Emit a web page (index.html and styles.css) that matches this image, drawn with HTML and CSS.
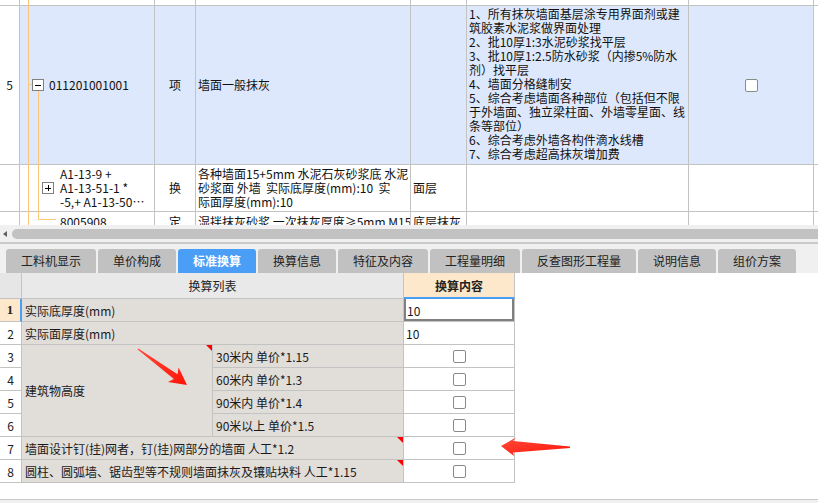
FILE: index.html
```html
<!DOCTYPE html>
<html lang="zh">
<head>
<meta charset="utf-8">
<title>标准换算</title>
<link rel="stylesheet" href="styles.css">
</head>
<body>
<div class="top">
  <div class="tgrid">
    <div class="c"></div><div class="c"></div><div class="c"></div><div class="c"></div><div class="c"></div><div class="c"></div><div class="c"></div><div class="c last"></div>

    <div class="c num mid">5</div>
    <div class="c sel mid code l1"><svg class="box" width="12" height="12" viewBox="0 0 12 12"><rect x="0.5" y="0.5" width="11" height="11" fill="#fff" stroke="#808080"/><path d="M3 6.5h6" stroke="#000"/></svg><span>011201001001</span></div>
    <div class="c sel mid center">项</div>
    <div class="c sel mid txt">墙面一般抹灰</div>
    <div class="c sel"></div>
    <div class="c sel txt feat">1、所有抹灰墙面基层涂专用界面剂或建<br>筑胶素水泥浆做界面处理<br>2、批10厚1:3水泥砂浆找平层<br>3、批10厚1:2.5防水砂浆（内掺5%防水<br>剂）找平层<br>4、墙面分格缝制安<br>5、综合考虑墙面各种部位（包括但不限<br>于外墙面、独立梁柱面、外墙零星面、线<br>条等部位）<br>6、综合考虑外墙各构件滴水线槽<br>7、综合考虑超高抹灰增加费</div>
    <div class="c sel mid center"><span class="cb"></span></div>
    <div class="c last"></div>

    <div class="c num"></div>
    <div class="c mid code l2"><svg class="box" width="12" height="12" viewBox="0 0 12 12"><rect x="0.5" y="0.5" width="11" height="11" fill="#fff" stroke="#808080"/><path d="M3 6.5h6M6.5 3v6" stroke="#000"/></svg><span class="lines">A1-13-9 +<br>A1-13-51-1 *<br>-5,+ A1-13-50…</span></div>
    <div class="c mid center">换</div>
    <div class="c txt pt2">各种墙面15+5mm 水泥石灰砂浆底 水泥<br>砂浆面 外墙&nbsp; 实际底厚度(mm):10&nbsp; 实<br>际面厚度(mm):10</div>
    <div class="c mid txt">面层</div>
    <div class="c"></div>
    <div class="c"></div>
    <div class="c last"></div>

    <div class="c num"></div>
    <div class="c code l3 pt3">8005908</div>
    <div class="c center pt3">定</div>
    <div class="c txt pt3">湿拌抹灰砂浆 一次抹灰厚度≥5mm M15</div>
    <div class="c txt pt3">底层抹灰</div>
    <div class="c"></div>
    <div class="c"></div>
    <div class="c last"></div>
  </div>
  <svg class="tree" width="818" height="225" viewBox="0 0 818 225">
    <g stroke="#fcc67a" stroke-width="1" fill="none">
      <path d="M28.5 0V225"/>
      <path d="M29 84.5H32"/>
      <path d="M38.5 91V219.5H56"/>
    </g>
  </svg>
</div>

<div class="hscroll">
  <span class="sarrow"></span>
  <div class="thumb"></div>
</div>
<div class="divider"></div>

<div class="tabs">
  <div class="tab w90">工料机显示</div>
  <div class="tab w78">单价构成</div>
  <div class="tab w78 active">标准换算</div>
  <div class="tab w78">换算信息</div>
  <div class="tab w90">特征及内容</div>
  <div class="tab w90">工程量明细</div>
  <div class="tab w114">反查图形工程量</div>
  <div class="tab w78">说明信息</div>
  <div class="tab w78">组价方案</div>
</div>

<div class="bottom">
  <div class="bgrid">
    <div class="b hnum"></div>
    <div class="b hlist span2">换算列表</div>
    <div class="b hval">换算内容</div>

    <div class="b rn cur">1</div>
    <div class="b item span2">实际底厚度(mm)</div>
    <div class="b val edit">10</div>

    <div class="b rn">2</div>
    <div class="b item span2">实际面厚度(mm)</div>
    <div class="b val">10</div>

    <div class="b rn">3</div>
    <div class="b item merged mark">建筑物高度</div>
    <div class="b item">30米内 单价*1.15</div>
    <div class="b val center"><span class="cb"></span></div>

    <div class="b rn">4</div>
    <div class="b item">60米内 单价*1.3</div>
    <div class="b val center"><span class="cb"></span></div>

    <div class="b rn">5</div>
    <div class="b item">90米内 单价*1.4</div>
    <div class="b val center"><span class="cb"></span></div>

    <div class="b rn">6</div>
    <div class="b item">90米以上 单价*1.5</div>
    <div class="b val center"><span class="cb"></span></div>

    <div class="b rn">7</div>
    <div class="b item span2 mark">墙面设计钉(挂)网者，钉(挂)网部分的墙面 人工*1.2</div>
    <div class="b val center"><span class="cb"></span></div>

    <div class="b rn">8</div>
    <div class="b item span2 mark">圆柱、圆弧墙、锯齿型等不规则墙面抹灰及镶贴块料 人工*1.15</div>
    <div class="b val center"><span class="cb"></span></div>
  </div>
  <svg class="arrows" width="818" height="226" viewBox="0 0 818 226">
    <defs>
      <linearGradient id="ag" x1="0" y1="0" x2="1" y2="1">
        <stop offset="0" stop-color="#ff4a3a"/>
        <stop offset="1" stop-color="#ff1408"/>
      </linearGradient>
    </defs>
    <polygon fill="url(#ag)" points="137.7,76.4 173.9,106.1 168,109 187,112 178.6,94.6 177.5,101.3 138.3,75.6"/>
    <polygon fill="url(#ag)" points="501,173 516,164.5 513,168 570,173.5 570,175 513,179.5 514,183"/>
  </svg>
</div>
<div class="foot"></div>
</body>
</html>
```

FILE: styles.css
```css
html, body {
  margin: 0;
  padding: 0;
}
body {
  width: 818px;
  height: 503px;
  overflow: hidden;
  background: #ffffff;
  font-family: "Noto Sans CJK SC", "Noto Sans", sans-serif;
  font-size: 12px;
  color: #111;
}

/* ---------- top grid ---------- */
.top {
  position: relative;
  height: 225px;
  overflow: hidden;
  background: #fff;
}
.tgrid {
  display: grid;
  grid-template-columns: 20px 135px 41px 215px 56px 222px 125px 1fr;
  grid-template-rows: 6px 159px 47px 30px;
}
.c {
  box-sizing: border-box;
  border-right: 1px solid #c3c3c3;
  border-bottom: 1px solid #c3c3c3;
  line-height: 14px;
  white-space: nowrap;
  overflow: hidden;
  display: flex;
}
.c.last {
  border-right: none;
}
.mid {
  align-items: center;
}
.center {
  justify-content: center;
}
.num {
  justify-content: center;
  color: #222;
}
.sel {
  background: #dde8fc;
}
.txt {
  padding-left: 2px;
}
.feat {
  padding-top: 1px;
  display: block;
}
.pt2 {
  padding-top: 2px;
  display: block;
}
.pt3 {
  padding-top: 3px;
}
.code {
  gap: 5px;
}
.code.l1 {
  padding-left: 12px;
}
.code.l2 {
  padding-left: 22px;
  gap: 6px;
}
.code.l3 {
  padding-left: 40px;
}
.box {
  flex: none;
  display: block;
}
.lines {
  display: block;
}
.cb {
  display: inline-block;
  box-sizing: border-box;
  width: 13px;
  height: 13px;
  border: 1px solid #8a8a8a;
  border-radius: 2px;
  background: #fff;
}
.tree {
  position: absolute;
  left: 0;
  top: 0;
  pointer-events: none;
}

/* ---------- scroll bar ---------- */
.hscroll {
  height: 17px;
  background: #f0f0f0;
  display: flex;
  align-items: center;
  padding-top: 1px;
  box-sizing: border-box;
}
.sarrow {
  width: 0;
  height: 0;
  border-top: 3px solid transparent;
  border-bottom: 3px solid transparent;
  border-right: 4px solid #606060;
  margin-left: 3px;
  margin-right: 5px;
}
.thumb {
  flex: 1;
  height: 10px;
  background: #c2c2c2;
  border-radius: 5px 0 0 5px;
}
.divider {
  height: 2px;
  background: #cacaca;
}

/* ---------- tabs ---------- */
.tabs {
  height: 29px;
  box-sizing: border-box;
  background: #f0f0f0;
  display: flex;
  align-items: flex-end;
  gap: 2px;
  padding-left: 6px;
}
.tab {
  height: 24px;
  line-height: 24px;
  text-align: center;
  background: #c1c1c1;
  border-radius: 3px 3px 0 0;
  color: #222;
  font-size: 12px;
}
.tab.active {
  background: #4a9ef5;
  color: #fff;
  font-weight: bold;
}
.w78 { width: 78px; }
.w90 { width: 90px; }
.w114 { width: 114px; }

/* ---------- bottom grid ---------- */
.bottom {
  position: relative;
  height: 226px;
  border-bottom: 1px solid #c8c8c8;
  background: #fff;
}
.bgrid {
  display: grid;
  grid-template-columns: 22px 191px 191px 111px;
  grid-template-rows: 26px repeat(8, 23px);
  width: 515px;
}
.b {
  box-sizing: border-box;
  border-right: 1px solid #c3c3c3;
  border-bottom: 1px solid #c3c3c3;
  display: flex;
  align-items: center;
  white-space: nowrap;
  overflow: hidden;
  color: #1a1a1a;
}
.span2 {
  grid-column: span 2;
}
.hnum {
  background: #e6e6e6;
}
.hlist {
  background: #e9e9e9;
  justify-content: center;
  color: #222;
}
.hval {
  background: #fde8cb;
  justify-content: center;
  font-weight: bold;
  color: #222;
  border-bottom: 2px solid #4a9ef5;
}
.rn {
  justify-content: center;
  background: #fff;
  color: #222;
}
.rn.cur {
  background: #fde8cb;
  font-weight: bold;
  font-family: "Liberation Serif", serif;
  font-size: 13px;
  border-right: 2px solid #4a9ef5;
}
.item {
  background: #e1ddd9;
  padding-left: 3px;
  position: relative;
}
.merged {
  grid-row: span 4;
}
.mark::after {
  content: "";
  position: absolute;
  top: 0;
  right: 0;
  width: 0;
  height: 0;
  border-top: 6px solid #ff0000;
  border-left: 6px solid transparent;
}
.val {
  background: #fff;
  padding-left: 2px;
}
.val.center {
  justify-content: center;
  padding-left: 0;
}
.edit {
  box-shadow: inset 2px 0 #808080, inset -2px 0 #808080, inset 0 -2px #808080;
  padding-left: 3px;
}
.arrows {
  position: absolute;
  left: 0;
  top: 0;
  pointer-events: none;
}
.foot {
  height: 3px;
  background: #f0f0f0;
}
```
